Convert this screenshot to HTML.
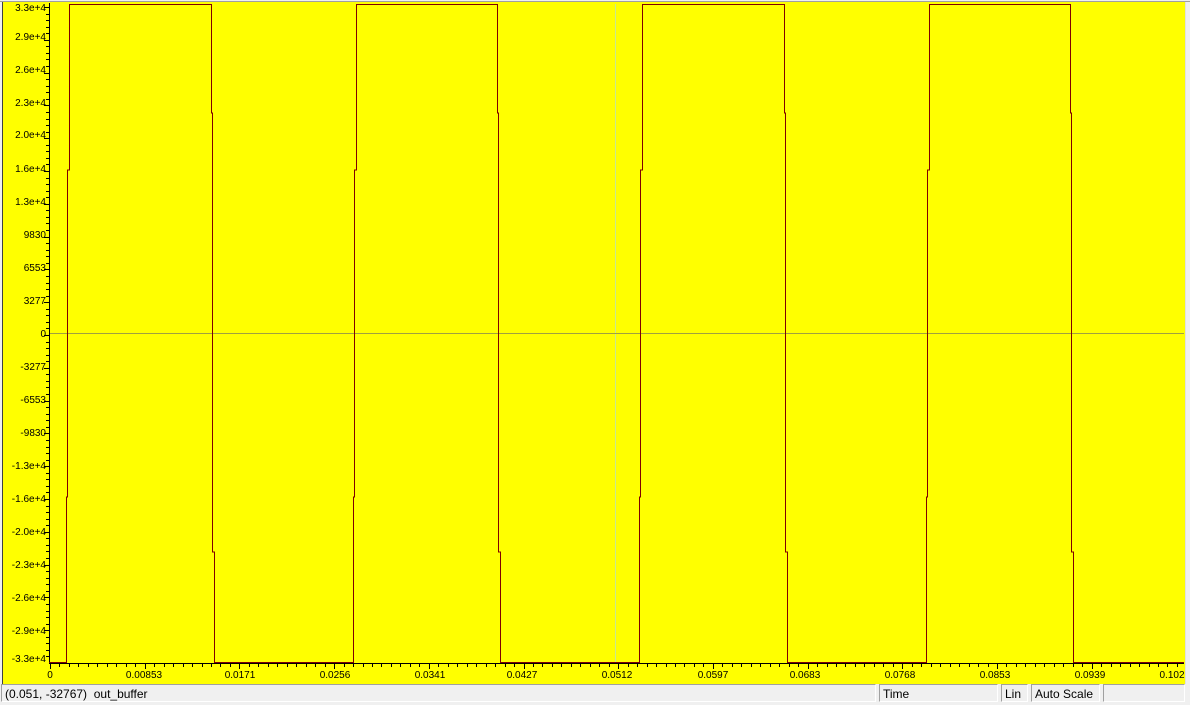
<!DOCTYPE html>
<html><head><style>
body{margin:0;width:1190px;height:705px;background:#f0f0f0;overflow:hidden;font-family:"Liberation Sans",sans-serif}
svg{position:absolute;left:0;top:0}
.sb{position:absolute;top:684px;height:18px;border:1px solid #a0a0a0;border-right-color:#fff;border-bottom-color:#fff;font-size:12px;line-height:18px;padding-left:3px;box-sizing:border-box;color:#000}
</style></head><body>
<svg width="1190" height="684" xmlns="http://www.w3.org/2000/svg" font-family="Liberation Sans, sans-serif" font-size="10">
<rect x="0" y="0" width="1190" height="684" fill="#f0f0f0"/>
<rect x="2" y="2" width="1183" height="682" fill="#ffff00"/>
<line x1="2.5" y1="2" x2="2.5" y2="684" stroke="#404040"/>
<line x1="0" y1="1.5" x2="1190" y2="1.5" stroke="#a0a0a0"/>
<line x1="1185.5" y1="2" x2="1185.5" y2="684" stroke="#e0e0e0"/>
<line x1="615.5" y1="4" x2="615.5" y2="662" stroke="#c8e890" stroke-width="1"/>
<line x1="49" y1="333.5" x2="1184" y2="333.5" stroke="#a0a040"/>
<line x1="49.5" y1="3" x2="49.5" y2="664" stroke="#000"/>
<line x1="49" y1="663.5" x2="1184" y2="663.5" stroke="#000"/>
<polyline fill="none" stroke="#800000" stroke-width="1" points="49,662.5 66.5,662.5 66.5,497 67.5,497 67.5,170 69.5,170 69.5,4.5 211.5,4.5 211.5,113 212.5,113 212.5,552 214.5,552 214.5,662.5 353.5,662.5 353.5,497 354.5,497 354.5,170 356.5,170 356.5,4.5 497.5,4.5 497.5,113 498.5,113 498.5,552 500.5,552 500.5,662.5 639.5,662.5 639.5,497 640.5,497 640.5,170 642.5,170 642.5,4.5 784.5,4.5 784.5,113 785.5,113 785.5,552 787.5,552 787.5,662.5 926.5,662.5 926.5,497 927.5,497 927.5,170 929.5,170 929.5,4.5 1070.5,4.5 1070.5,113 1071.5,113 1071.5,552 1073.5,552 1073.5,662.5 1184,662.5"/>
<g text-anchor="end" fill="#000">
<text x="46" y="11">3.3e+4</text><text x="46" y="40">2.9e+4</text><text x="46" y="73">2.6e+4</text><text x="46" y="106">2.3e+4</text><text x="46" y="138">2.0e+4</text><text x="46" y="172">1.6e+4</text><text x="46" y="205">1.3e+4</text><text x="46" y="238">9830</text><text x="46" y="271">6553</text><text x="46" y="304">3277</text><text x="46" y="337">0</text><text x="46" y="370">-3277</text><text x="46" y="403">-6553</text><text x="46" y="436">-9830</text><text x="46" y="469">-1.3e+4</text><text x="46" y="502">-1.6e+4</text><text x="46" y="535">-2.0e+4</text><text x="46" y="568">-2.3e+4</text><text x="46" y="601">-2.6e+4</text><text x="46" y="634">-2.9e+4</text><text x="46" y="662">-3.3e+4</text>
</g>
<g text-anchor="middle" fill="#000">
<text x="50" y="678">0</text><text x="144" y="678">0.00853</text><text x="240" y="678">0.0171</text><text x="335" y="678">0.0256</text><text x="430" y="678">0.0341</text><text x="522" y="678">0.0427</text><text x="617" y="678">0.0512</text><text x="713" y="678">0.0597</text><text x="805" y="678">0.0683</text><text x="900" y="678">0.0768</text><text x="995" y="678">0.0853</text><text x="1090" y="678">0.0939</text><text x="1172" y="678">0.102</text>
</g>
<g id="ticks" stroke="#000"></g>
</svg>
<div class="sb" style="left:1px;width:875px">(0.051, -32767)&nbsp; out_buffer</div>
<div class="sb" style="left:879px;width:119px">Time</div>
<div class="sb" style="left:1001px;width:27px">Lin</div>
<div class="sb" style="left:1031px;width:69px">Auto Scale</div>
<div class="sb" style="left:1103px;width:82px"></div>
<script>
var ns="http://www.w3.org/2000/svg",g=document.getElementById("ticks");
function L(a,b,c,d){var l=document.createElementNS(ns,"line");l.setAttribute("x1",a);l.setAttribute("y1",b);l.setAttribute("x2",c);l.setAttribute("y2",d);g.appendChild(l);}
for(var i=0;i<=100;i++){var y=Math.round(7+i*6.56)+.5;if(y>663)break;L(i%5==0?44:46,y,49,y);}
for(var i=0;i<=120;i++){var x=Math.round(50+i*9.47)+.5;if(x>1184)break;L(x,664,x,i%10==0?669:667);}
</script>
</body></html>
